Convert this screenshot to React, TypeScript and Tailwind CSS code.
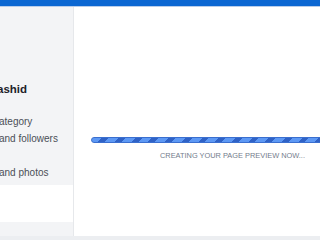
import React from "react";

export default function App() {
  return (
    <div className="w-[320px] h-[240px] overflow-hidden flex flex-col bg-white" style={{ fontFamily: '"Liberation Sans", Arial, sans-serif' }}>
      <div className="h-[6px] bg-[#0b67d2] shrink-0" />
      <div className="h-[1px] bg-[#b8cdea] shrink-0" />
      <div className="flex flex-1 min-h-0">
        <div className="w-[74px] shrink-0 bg-[#f3f4f6] border-r border-[#e6e8eb] flex flex-col overflow-hidden">
          <div className="h-[74px] shrink-0" />
          <div className="ml-[-3px] text-[11.5px] font-bold text-[#1d2129] leading-[17px] whitespace-nowrap">ashid</div>
          <div className="h-[15px] shrink-0" />
          <div className="ml-[-1px] text-[10px] text-[#4b4f56] leading-[17px] whitespace-nowrap">ategory</div>
          <div className="ml-[-1px] text-[10px] text-[#4b4f56] leading-[17px] whitespace-nowrap">and followers</div>
          <div className="h-[17px] shrink-0" />
          <div className="ml-[-1px] text-[10px] text-[#4b4f56] leading-[17px] whitespace-nowrap">and photos</div>
          <div className="h-[4px] shrink-0" />
          <div className="h-[37px] bg-white shrink-0" />
        </div>
        <div className="flex-1 min-w-0 overflow-hidden">
          <div className="ml-[17px] w-[283px] mt-[130px]">
            <div className="h-[6px] rounded-l-full border border-[#3a6fcf] bg-[repeating-linear-gradient(135deg,#5d98f4_0px,#5d98f4_7px,#2f62c6_7px,#2f62c6_11.8px)]" />
            <div className="mt-[8px] text-center text-[7.4px] leading-[10px] text-[#737c8c] whitespace-nowrap">CREATING YOUR PAGE PREVIEW NOW...</div>
          </div>
        </div>
      </div>
      <div className="h-[4px] bg-[#eceef1] shrink-0" />
    </div>
  );
}
